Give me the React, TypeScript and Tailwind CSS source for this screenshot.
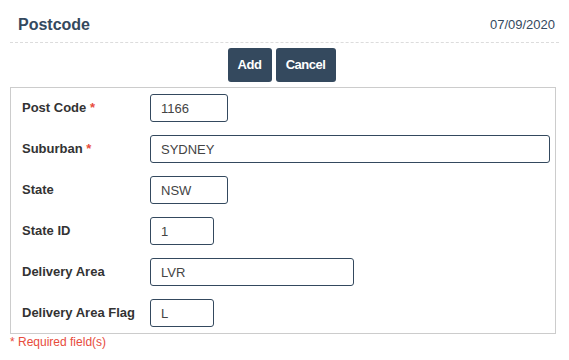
const fields = [
  { label: "Post Code", value: "1166", required: true, width: "w-[78px]" },
  { label: "Suburban", value: "SYDNEY", required: true, width: "w-[400px]" },
  { label: "State", value: "NSW", required: false, width: "w-[78px]" },
  { label: "State ID", value: "1", required: false, width: "w-[64px]" },
  { label: "Delivery Area", value: "LVR", required: false, width: "w-[204px]" },
  { label: "Delivery Area Flag", value: "L", required: false, width: "w-[64px]" },
];

const App = () => {
  return (
    <div
      className="w-[569px] h-[360px] bg-white px-[10px] text-[#333]"
      style={{ fontFamily: '"Liberation Sans", Arial, sans-serif' }}
    >
      {/* Header */}
      <div className="flex items-center justify-between pt-[15px] pb-[7px] border-b border-dashed border-[#dcdcdc]">
        <h1 className="pl-[8px] text-[16px] leading-[20px] font-bold text-[#34495e]">Postcode</h1>
        <span className="pr-[4px] text-[13px] leading-[20px] text-[#34495e]">07/09/2020</span>
      </div>

      {/* Actions */}
      <div className="flex justify-center gap-[4px] mt-[5px] pr-[6px]">
        <button className="h-[34px] w-[44px] rounded-[3px] bg-[#34495e] text-white text-[13px] font-bold tracking-[-0.5px]">
          Add
        </button>
        <button className="h-[34px] w-[60px] rounded-[3px] bg-[#34495e] text-white text-[13px] font-bold tracking-[-0.5px]">
          Cancel
        </button>
      </div>

      {/* Form */}
      <div className="mt-[5px] w-[546px] border border-[#cccccc] pt-[6px] pb-[6px] pl-[11px] flex flex-col gap-[13px]">
        {fields.map((f) => (
          <div key={f.label} className="flex items-center h-[28px]">
            <label className="w-[128px] text-[13px] font-bold text-[#333]">
              {f.label}
              {f.required && <span className="text-[#e74c3c]"> *</span>}
            </label>
            <input
              className={`${f.width} h-[28px] rounded-[3px] border border-[#34495e] px-[10px] text-[13px] text-[#444] outline-none`}
              defaultValue={f.value}
            />
          </div>
        ))}
      </div>

      <p className="mt-[1px] text-[12px] leading-[14px] text-[#e74c3c]">* Required field(s)</p>
    </div>
  );
};

export default App;
